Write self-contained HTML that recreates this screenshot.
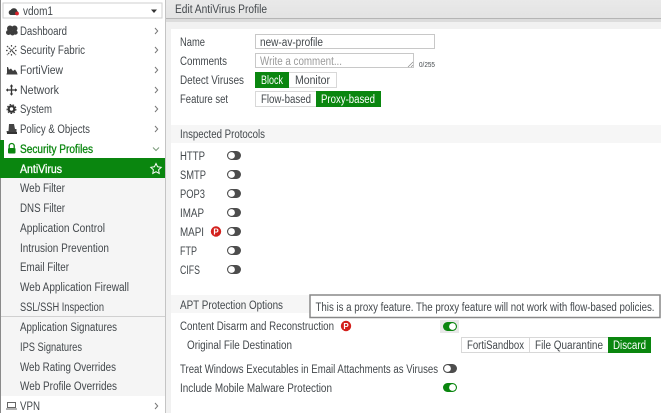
<!DOCTYPE html>
<html><head><meta charset="utf-8"><title>Edit AntiVirus Profile</title>
<style>
html,body{margin:0;padding:0;width:661px;height:413px;overflow:hidden;background:#fff}
svg{display:block;filter:blur(0.3px)}
text{font-family:"Liberation Sans",sans-serif;font-size:11.5px;fill:#43484c}
.w{fill:#fff}
.g{fill:#9a9a9a}
</style></head><body>
<svg width="661" height="413" viewBox="0 0 661 413" xmlns="http://www.w3.org/2000/svg">
<defs>
<linearGradient id="hd" x1="0" y1="0" x2="0" y2="1"><stop offset="0" stop-color="#e9e9e9"/><stop offset="1" stop-color="#e3e3e3"/></linearGradient>
<g id="off"><rect x="0" y="0" width="14" height="9" rx="4.5" fill="#4d4d4d"/><circle cx="4.5" cy="4.5" r="3.4" fill="#fff"/></g>
<g id="on"><rect x="0" y="0" width="14" height="9" rx="4.5" fill="#0a860f"/><circle cx="9.5" cy="4.5" r="3.4" fill="#fff"/></g>
<g id="p"><circle cx="0" cy="0" r="5.2" fill="#d3201c"/><text x="0" y="3" text-anchor="middle" style="font-size:8px;font-weight:bold;fill:#fff">P</text></g>
<path id="chev" d="M0 0L2.700 3L0 6" fill="none" stroke="#777" stroke-width="1"/>
</defs>

<!-- backgrounds -->
<rect width="661" height="413" fill="#f1f1f1"/>
<rect x="171" y="29" width="490" height="384" fill="#fff"/>
<rect x="165" y="0" width="496" height="18" fill="url(#hd)"/>
<rect x="165" y="18" width="496" height="1" fill="#b5b5b5"/>
<rect x="165" y="19" width="496" height="3" fill="#dcdcdc"/>
<text x="175" y="13" textLength="92" lengthAdjust="spacingAndGlyphs">Edit AntiVirus Profile</text>

<!-- sidebar -->
<rect x="0" y="0" width="165" height="413" fill="#fff"/>
<rect x="0" y="158" width="165" height="238" fill="#f5f5f5"/>
<rect x="165" y="0" width="1" height="413" fill="#c4c4c4"/>
<rect x="0" y="0" width="1" height="413" fill="#8a8a8a"/>
<rect x="0" y="140" width="4" height="28" fill="#0a860f"/>
<rect x="0" y="158" width="165" height="20" fill="#0a860f"/>
<rect x="1" y="316" width="164" height="1" fill="#d0d0d0"/>

<rect x="3" y="3" width="159" height="15" fill="#fff" stroke="#cfcfcf"/>
<path d="M10.500 15a2.600 2.600 0 0 1 .2-5a3.600 3.600 0 0 1 6.600 1a2.300 2.300 0 0 1 0 4z" fill="#3a3a3a"/>
<circle cx="17" cy="13.500" r="1.900" fill="#d8202a"/>
<text x="23" y="15" textLength="30" lengthAdjust="spacingAndGlyphs">vdom1</text>
<path d="M151 9.500h6l-3 3.500z" fill="#333"/>

<!-- icons -->
<g fill="#3d3d3d">
<circle cx="10" cy="28.500" r="3"/><circle cx="14.500" cy="28.500" r="3"/><circle cx="8.500" cy="32.500" r="2.500"/><circle cx="12.500" cy="33" r="2.500"/><circle cx="15.500" cy="32.500" r="2.200"/>
</g>
<path d="M7 46l9 9M16 46l-9 9M11.500 45v2M11.500 54v2M6 50.500h2M15 50.500h2M9 48l1 1M13 52l1 1" stroke="#4a4a4a" stroke-width="1.200" stroke-dasharray="1.600 .8" fill="none"/>
<path d="M7 67v7h10v-1.500l-2-3-2 1.500-2-2.500-2 1.200-1-2.700z" fill="#3d3d3d"/>
<path d="M6.500 74h11" stroke="#3d3d3d"/>
<path d="M11.500 85v10M7 90h10" stroke="#333" stroke-width="1.300"/>
<path d="M9.800 86.500l1.700-2.200 1.700 2.200zM9.800 93.500l1.700 2.200 1.700-2.200zM8 88.300l-2.200 1.700 2.200 1.700zM15 88.300l2.200 1.700-2.200 1.700z" fill="#333"/>
<circle cx="11.500" cy="109" r="2.800" fill="none" stroke="#333" stroke-width="2.200"/>
<circle cx="11.500" cy="109" r="4.400" fill="none" stroke="#333" stroke-width="1.100" stroke-dasharray="1.700 1.400"/>
<path d="M9 124h5l1 5h1.500v4.500h-9.500l-.5-2.500h2z" fill="#444"/><rect x="7" y="132" width="10" height="2" fill="#333"/>
<path d="M9.200 148v-2a2.500 2.500 0 0 1 5 0v2" fill="none" stroke="#0a860f" stroke-width="1.300"/>
<rect x="8" y="148" width="7.500" height="5.500" rx="1" fill="#0a860f"/>
<path d="M7.500 402.500h8v5h-8zM6 409h11" fill="none" stroke="#666" stroke-width="1"/>

<!-- chevrons -->
<use href="#chev" x="155" y="28"/><use href="#chev" x="155" y="47"/><use href="#chev" x="155" y="67"/>
<use href="#chev" x="155" y="87"/><use href="#chev" x="155" y="106"/><use href="#chev" x="155" y="126"/>
<use href="#chev" x="155" y="403"/>
<path d="M153 147.500l3 3 3-3" fill="none" stroke="#7a9a7a"/>
<path d="M156 163.500l1.600 3.300 3.600.5-2.600 2.500.6 3.600-3.200-1.700-3.200 1.700.6-3.600-2.600-2.500 3.600-.5z" fill="none" stroke="#fff" stroke-width="1"/>

<!-- menu text -->
<text x="20" y="35" textLength="47" lengthAdjust="spacingAndGlyphs">Dashboard</text>
<text x="20" y="54" textLength="65" lengthAdjust="spacingAndGlyphs">Security Fabric</text>
<text x="20" y="74" textLength="43" lengthAdjust="spacingAndGlyphs">FortiView</text>
<text x="20" y="94" textLength="39" lengthAdjust="spacingAndGlyphs">Network</text>
<text x="20" y="113" textLength="32" lengthAdjust="spacingAndGlyphs">System</text>
<text x="20" y="133" textLength="70" lengthAdjust="spacingAndGlyphs">Policy &amp; Objects</text>
<text x="20" y="153" textLength="73" lengthAdjust="spacingAndGlyphs" style="fill:#0a860f;stroke:#0a860f;stroke-width:.3">Security Profiles</text>
<text x="20" y="173" textLength="42" lengthAdjust="spacingAndGlyphs" class="w" style="stroke:#fff;stroke-width:.3">AntiVirus</text>
<text x="20" y="192" textLength="45" lengthAdjust="spacingAndGlyphs">Web Filter</text>
<text x="20" y="212" textLength="45" lengthAdjust="spacingAndGlyphs">DNS Filter</text>
<text x="20" y="232" textLength="85" lengthAdjust="spacingAndGlyphs">Application Control</text>
<text x="20" y="252" textLength="89" lengthAdjust="spacingAndGlyphs">Intrusion Prevention</text>
<text x="20" y="271" textLength="49" lengthAdjust="spacingAndGlyphs">Email Filter</text>
<text x="20" y="291" textLength="109" lengthAdjust="spacingAndGlyphs">Web Application Firewall</text>
<text x="20" y="311" textLength="84" lengthAdjust="spacingAndGlyphs">SSL/SSH Inspection</text>
<text x="20" y="331" textLength="97" lengthAdjust="spacingAndGlyphs">Application Signatures</text>
<text x="20" y="351" textLength="62" lengthAdjust="spacingAndGlyphs">IPS Signatures</text>
<text x="20" y="371" textLength="96" lengthAdjust="spacingAndGlyphs">Web Rating Overrides</text>
<text x="20" y="390" textLength="97" lengthAdjust="spacingAndGlyphs">Web Profile Overrides</text>
<text x="20" y="410" textLength="20" lengthAdjust="spacingAndGlyphs">VPN</text>

<!-- form -->
<text x="180" y="46" textLength="25" lengthAdjust="spacingAndGlyphs">Name</text>
<rect x="255.500" y="34.500" width="179" height="14" fill="#fff" stroke="#c8c8c8"/>
<text x="260" y="46" textLength="63" lengthAdjust="spacingAndGlyphs">new-av-profile</text>
<text x="180" y="65" textLength="47" lengthAdjust="spacingAndGlyphs">Comments</text>
<rect x="255.500" y="53.500" width="158" height="14" fill="#fff" stroke="#c8c8c8"/>
<text x="260" y="65" textLength="82" lengthAdjust="spacingAndGlyphs" class="g">Write a comment...</text>
<path d="M408 67l5-5M411 67l2-2" stroke="#888" stroke-width=".7"/>
<text x="419" y="67" textLength="16" lengthAdjust="spacingAndGlyphs" style="font-size:7px">0/255</text>
<text x="180" y="84" textLength="64" lengthAdjust="spacingAndGlyphs">Detect Viruses</text>
<rect x="255.500" y="72.500" width="81" height="15" fill="#fff" stroke="#d8d8d8"/>
<rect x="255" y="72" width="34" height="16" fill="#0a860f"/>
<text x="261" y="84" textLength="22" lengthAdjust="spacingAndGlyphs" class="w">Block</text>
<text x="295" y="84" textLength="35" lengthAdjust="spacingAndGlyphs">Monitor</text>
<text x="180" y="103" textLength="48" lengthAdjust="spacingAndGlyphs">Feature set</text>
<rect x="255.500" y="91.500" width="125" height="15" fill="#fff" stroke="#d8d8d8"/>
<rect x="316" y="91" width="65" height="16" fill="#0a860f"/>
<text x="261" y="103" textLength="50" lengthAdjust="spacingAndGlyphs">Flow-based</text>
<text x="321" y="103" textLength="54" lengthAdjust="spacingAndGlyphs" class="w">Proxy-based</text>

<rect x="171" y="125" width="490" height="18" fill="#f6f6f6"/>
<text x="180" y="138" textLength="85" lengthAdjust="spacingAndGlyphs">Inspected Protocols</text>

<text x="180" y="160" textLength="25" lengthAdjust="spacingAndGlyphs">HTTP</text><use href="#off" x="227" y="151"/>
<text x="180" y="179" textLength="26" lengthAdjust="spacingAndGlyphs">SMTP</text><use href="#off" x="227" y="170"/>
<text x="180" y="198" textLength="25" lengthAdjust="spacingAndGlyphs">POP3</text><use href="#off" x="227" y="189"/>
<text x="180" y="217" textLength="24" lengthAdjust="spacingAndGlyphs">IMAP</text><use href="#off" x="227" y="208"/>
<text x="180" y="236" textLength="24" lengthAdjust="spacingAndGlyphs">MAPI</text><use href="#p" x="216" y="231.500"/><use href="#off" x="227" y="227"/>
<text x="180" y="255" textLength="17" lengthAdjust="spacingAndGlyphs">FTP</text><use href="#off" x="227" y="246"/>
<text x="180" y="274" textLength="20" lengthAdjust="spacingAndGlyphs">CIFS</text><use href="#off" x="227" y="265"/>

<rect x="171" y="295" width="490" height="18" fill="#f6f6f6"/>
<text x="180" y="309" textLength="103" lengthAdjust="spacingAndGlyphs">APT Protection Options</text>
<rect x="310" y="295" width="350" height="22.500" fill="#fff" stroke="#888" stroke-width="1.500"/>
<text x="315.500" y="311" textLength="339" lengthAdjust="spacingAndGlyphs">This is a proxy feature. The proxy feature will not work with flow-based policies.</text>

<text x="180" y="330" textLength="154" lengthAdjust="spacingAndGlyphs">Content Disarm and Reconstruction</text>
<use href="#p" x="346" y="326"/>
<rect x="440" y="320" width="19" height="13" fill="#e8e8e8"/>
<use href="#on" x="443" y="322" />
<text x="187" y="349" textLength="105" lengthAdjust="spacingAndGlyphs">Original File Destination</text>
<rect x="461.500" y="337.500" width="189" height="15" fill="#fff" stroke="#d8d8d8"/>
<path d="M529.500 338v15" stroke="#d8d8d8"/>
<rect x="608" y="337" width="43" height="16" fill="#0a860f"/>
<text x="467" y="349" textLength="57" lengthAdjust="spacingAndGlyphs">FortiSandbox</text>
<text x="535" y="349" textLength="68" lengthAdjust="spacingAndGlyphs">File Quarantine</text>
<text x="613" y="349" textLength="33" lengthAdjust="spacingAndGlyphs" class="w">Discard</text>
<text x="180" y="373" textLength="258" lengthAdjust="spacingAndGlyphs">Treat Windows Executables in Email Attachments as Viruses</text>
<use href="#off" x="443" y="364"/>
<text x="180" y="392" textLength="152" lengthAdjust="spacingAndGlyphs">Include Mobile Malware Protection</text>
<use href="#on" x="443" y="383"/>
</svg>
</body></html>
